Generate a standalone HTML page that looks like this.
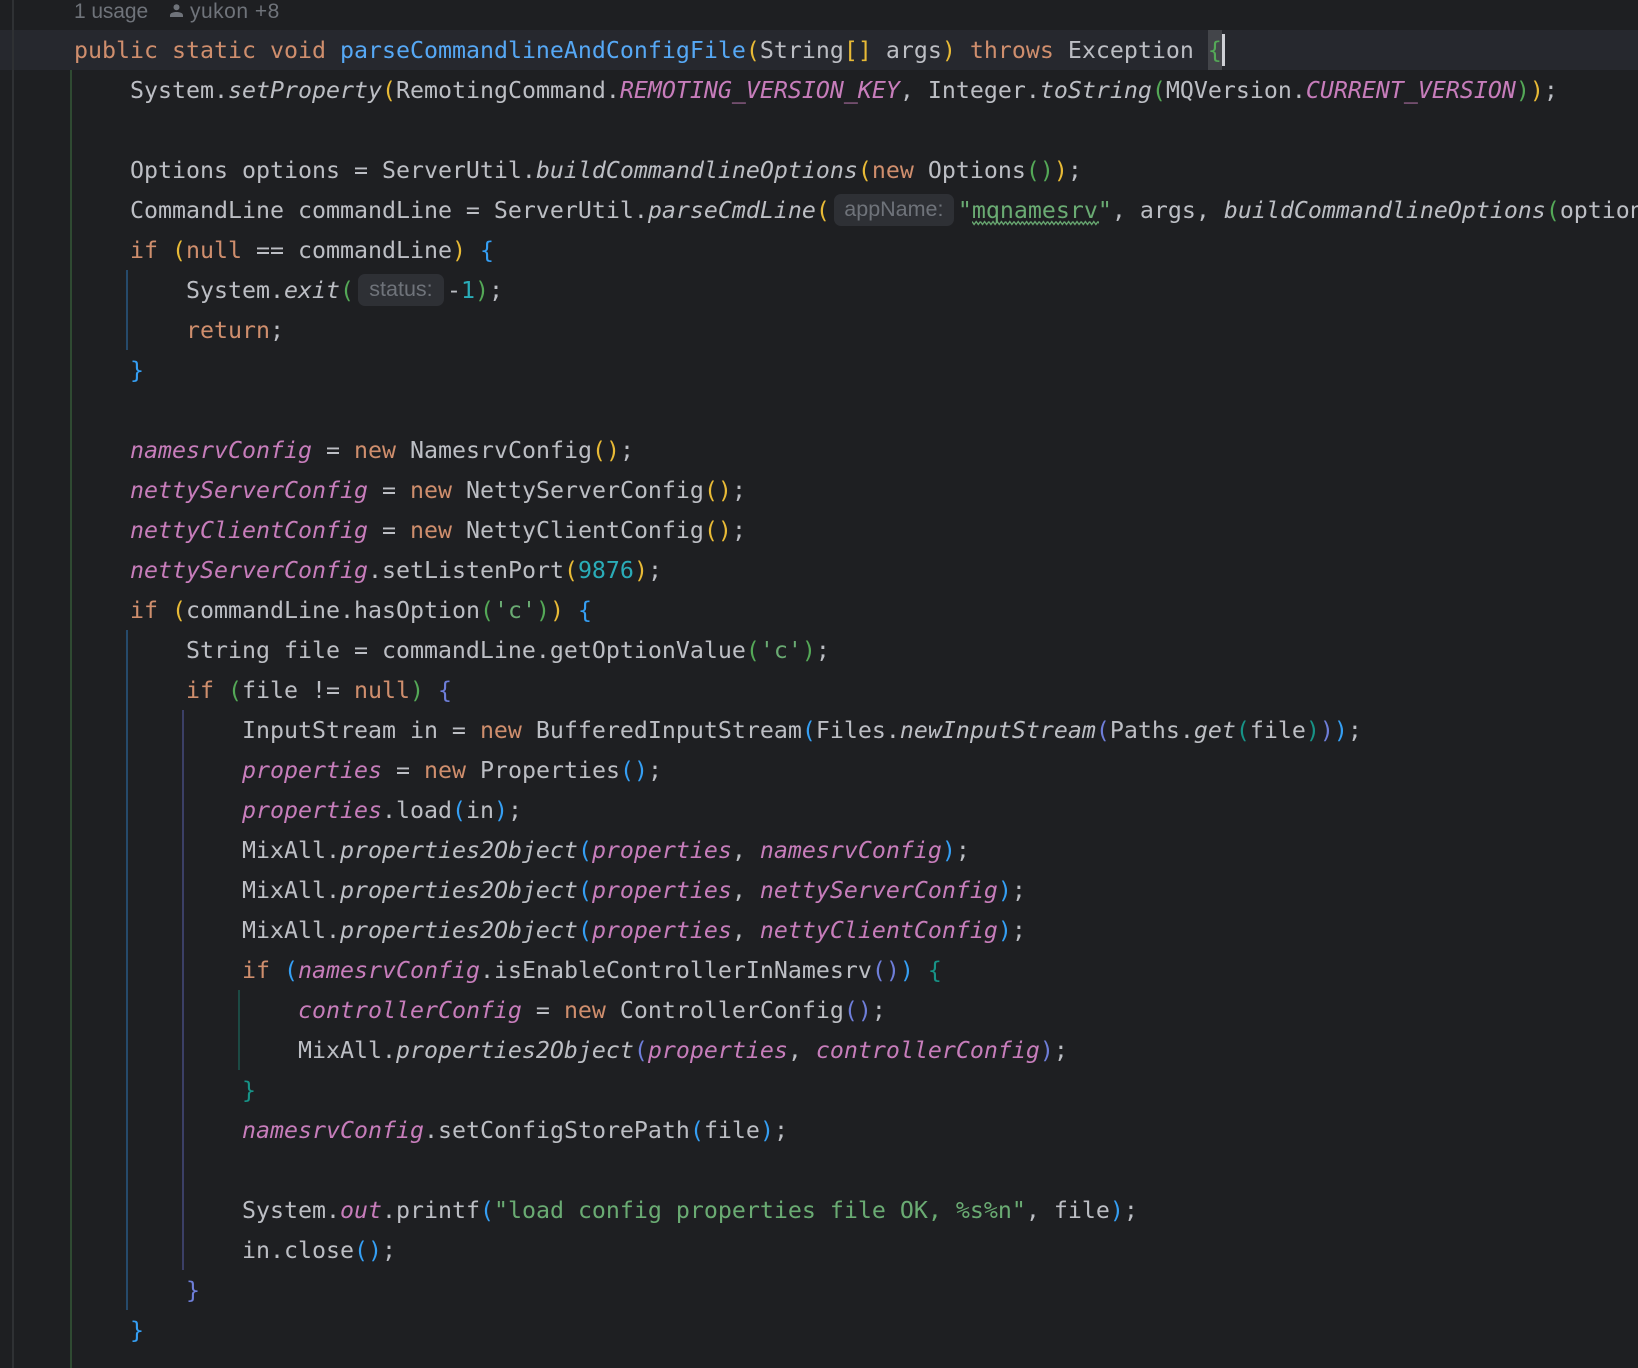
<!DOCTYPE html>
<html><head><meta charset="utf-8">
<style>
html,body{margin:0;padding:0;background:#1E1F22}
#e{position:relative;width:1638px;height:1368px;overflow:hidden;background:#1E1F22;font-family:"DejaVu Sans Mono","Liberation Mono",monospace;font-size:23.25px;color:#BCBEC4}
.r{position:absolute;left:74px;height:40px;line-height:40px;white-space:pre;margin-top:1px}
.l{position:absolute}
.k{color:#CF8E6D}.m{color:#56A8F5}.i{font-style:italic}.p{color:#C77DBB;font-style:italic}
.s{color:#6AAB73}.n{color:#2AACB8}
.y{color:#E8BA36}.g{color:#54A857}.b{color:#359FF4}.v{color:#6E7ED9}.t{color:#179387}
.h{display:inline-block;box-sizing:border-box;height:32px;line-height:31px;background:#2E3035;border-radius:7px;color:#6F737A;font-family:"Liberation Sans",sans-serif;font-size:21.5px;text-align:center;vertical-align:2px}
</style></head><body><div id="e">
<div class="l" style="left:0;top:30px;width:1638px;height:40px;background:#26282E"></div>
<div class="l" style="left:12px;top:0;width:2px;height:1368px;background:#2F3134"></div>
<div class="l" style="left:70px;top:70px;width:2px;height:1298px;background:#2F4A32"></div>
<div class="l" style="left:126px;top:270px;width:2px;height:80px;background:#264A6B"></div>
<div class="l" style="left:126px;top:630px;width:2px;height:680px;background:#264A6B"></div>
<div class="l" style="left:182px;top:710px;width:2px;height:560px;background:#3B3F66"></div>
<div class="l" style="left:238px;top:990px;width:2px;height:80px;background:#1C4A44"></div>
<div class="l" style="left:1208px;top:30px;width:14px;height:40px;background:#43454A"></div>
<div class="l" style="left:1222px;top:34px;width:3px;height:32px;background:#CED0D6"></div>

<div class="l" style="left:74px;top:-8px;height:40px;line-height:40px;font-family:'Liberation Sans',sans-serif;font-size:21px;letter-spacing:-.1px;color:#6F737A;white-space:pre">1 usage</div>
<svg class="l" style="left:169px;top:4px" width="15" height="13" viewBox="0 0 15 13"><circle cx="7.5" cy="3.2" r="3" fill="#6F737A"/><path d="M1 13V11.5C1 9 4 8 7.5 8S14 9 14 11.5V13Z" fill="#6F737A"/></svg>
<div class="l" style="left:190px;top:-8px;height:40px;line-height:40px;font-family:'Liberation Sans',sans-serif;font-size:21px;letter-spacing:.5px;color:#6F737A;white-space:pre">yukon +8</div>

<div class="r" style="top:30px"><span class="k">public static void</span> <span class="m">parseCommandlineAndConfigFile</span><span class="y">(</span>String<span class="y">[]</span> args<span class="y">)</span> <span class="k">throws</span> Exception <span class="g">{</span></div>
<div class="r" style="top:70px">    System.<span class="i">setProperty</span><span class="y">(</span>RemotingCommand.<span class="p">REMOTING_VERSION_KEY</span>, Integer.<span class="i">toString</span><span class="g">(</span>MQVersion.<span class="p">CURRENT_VERSION</span><span class="g">)</span><span class="y">)</span>;</div>
<div class="r" style="top:150px">    Options options = ServerUtil.<span class="i">buildCommandlineOptions</span><span class="y">(</span><span class="k">new</span> Options<span class="g">()</span><span class="y">)</span>;</div>
<div class="r" style="top:190px">    CommandLine commandLine = ServerUtil.<span class="i">parseCmdLine</span><span class="y">(</span><span class="h" style="width:120px;margin:0 4px 0 4px">appName:</span><span class="s">"mqnamesrv"</span>, args, <span class="i">buildCommandlineOptions</span><span class="g">(</span>options<span class="g">)</span><span class="y">)</span>;</div>
<div class="r" style="top:230px">    <span class="k">if</span> <span class="y">(</span><span class="k">null</span> == commandLine<span class="y">)</span> <span class="b">{</span></div>
<div class="r" style="top:270px">        System.<span class="i">exit</span><span class="g">(</span><span class="h" style="width:86px;margin:0 3px 0 4px">status:</span>-<span class="n">1</span><span class="g">)</span>;</div>
<div class="r" style="top:310px">        <span class="k">return</span>;</div>
<div class="r" style="top:350px">    <span class="b">}</span></div>
<div class="r" style="top:430px">    <span class="p">namesrvConfig</span> = <span class="k">new</span> NamesrvConfig<span class="y">()</span>;</div>
<div class="r" style="top:470px">    <span class="p">nettyServerConfig</span> = <span class="k">new</span> NettyServerConfig<span class="y">()</span>;</div>
<div class="r" style="top:510px">    <span class="p">nettyClientConfig</span> = <span class="k">new</span> NettyClientConfig<span class="y">()</span>;</div>
<div class="r" style="top:550px">    <span class="p">nettyServerConfig</span>.setListenPort<span class="y">(</span><span class="n">9876</span><span class="y">)</span>;</div>
<div class="r" style="top:590px">    <span class="k">if</span> <span class="y">(</span>commandLine.hasOption<span class="g">(</span><span class="s">'c'</span><span class="g">)</span><span class="y">)</span> <span class="b">{</span></div>
<div class="r" style="top:630px">        String file = commandLine.getOptionValue<span class="g">(</span><span class="s">'c'</span><span class="g">)</span>;</div>
<div class="r" style="top:670px">        <span class="k">if</span> <span class="g">(</span>file != <span class="k">null</span><span class="g">)</span> <span class="v">{</span></div>
<div class="r" style="top:710px">            InputStream in = <span class="k">new</span> BufferedInputStream<span class="b">(</span>Files.<span class="i">newInputStream</span><span class="v">(</span>Paths.<span class="i">get</span><span class="t">(</span>file<span class="t">)</span><span class="v">)</span><span class="b">)</span>;</div>
<div class="r" style="top:750px">            <span class="p">properties</span> = <span class="k">new</span> Properties<span class="b">()</span>;</div>
<div class="r" style="top:790px">            <span class="p">properties</span>.load<span class="b">(</span>in<span class="b">)</span>;</div>
<div class="r" style="top:830px">            MixAll.<span class="i">properties2Object</span><span class="b">(</span><span class="p">properties</span>, <span class="p">namesrvConfig</span><span class="b">)</span>;</div>
<div class="r" style="top:870px">            MixAll.<span class="i">properties2Object</span><span class="b">(</span><span class="p">properties</span>, <span class="p">nettyServerConfig</span><span class="b">)</span>;</div>
<div class="r" style="top:910px">            MixAll.<span class="i">properties2Object</span><span class="b">(</span><span class="p">properties</span>, <span class="p">nettyClientConfig</span><span class="b">)</span>;</div>
<div class="r" style="top:950px">            <span class="k">if</span> <span class="b">(</span><span class="p">namesrvConfig</span>.isEnableControllerInNamesrv<span class="v">()</span><span class="b">)</span> <span class="t">{</span></div>
<div class="r" style="top:990px">                <span class="p">controllerConfig</span> = <span class="k">new</span> ControllerConfig<span class="v">()</span>;</div>
<div class="r" style="top:1030px">                MixAll.<span class="i">properties2Object</span><span class="v">(</span><span class="p">properties</span>, <span class="p">controllerConfig</span><span class="v">)</span>;</div>
<div class="r" style="top:1070px">            <span class="t">}</span></div>
<div class="r" style="top:1110px">            <span class="p">namesrvConfig</span>.setConfigStorePath<span class="b">(</span>file<span class="b">)</span>;</div>
<div class="r" style="top:1190px">            System.<span class="p">out</span>.printf<span class="b">(</span><span class="s">"load config properties file OK, %s%n"</span>, file<span class="b">)</span>;</div>
<div class="r" style="top:1230px">            in.close<span class="b">()</span>;</div>
<div class="r" style="top:1270px">        <span class="v">}</span></div>
<div class="r" style="top:1310px">    <span class="b">}</span></div>

<svg class="l" style="left:972px;top:220px" width="127" height="6" viewBox="0 0 127 6"><defs><pattern id="w" width="8.4" height="6" patternUnits="userSpaceOnUse"><path d="M0 1.5 L2.1 4.5 L4.2 1.5 L6.3 4.5 L8.4 1.5" fill="none" stroke="#6AAB73" stroke-width="1.3"/></pattern></defs><rect width="127" height="6" fill="url(#w)"/></svg>
</div></body></html>
